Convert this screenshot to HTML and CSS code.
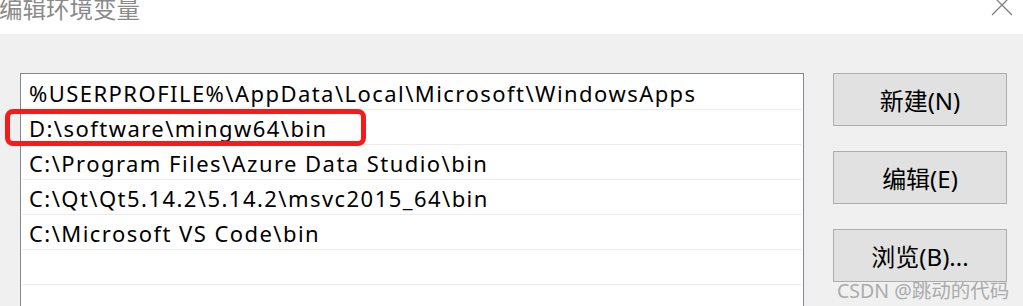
FILE: index.html
```html
<!DOCTYPE html>
<html lang="zh-CN">
<head>
    <meta charset="UTF-8">
    <meta name="viewport" content="width=device-width, initial-scale=1.0">
    <title>编辑环境变量</title>
    <link rel="stylesheet" href="styles.css">
</head>
<body>
    <div class="titlebar">
        <span class="title">编辑环境变量</span>
        <svg class="close" width="22" height="22" viewBox="0 0 22 22">
            <path d="M1 1 L21 21 M21 1 L1 21" stroke="#808080" stroke-width="1.3" fill="none"/>
        </svg>
    </div>
    <div class="dialog">
        <div class="path-list">
            <div class="row">%USERPROFILE%\AppData\Local\Microsoft\WindowsApps</div>
            <div class="row">D:\software\mingw64\bin</div>
            <div class="row">C:\Program Files\Azure Data Studio\bin</div>
            <div class="row">C:\Qt\Qt5.14.2\5.14.2\msvc2015_64\bin</div>
            <div class="row">C:\Microsoft VS Code\bin</div>
            <div class="row"></div>
            <div class="row"></div>
        </div>
        <div class="actions">
            <button class="btn">新建(N)</button>
            <button class="btn">编辑(E)</button>
            <button class="btn">浏览(B)...</button>
        </div>
    </div>
    <div class="highlight"></div>
    <div class="watermark">CSDN @跳动的代码</div>
</body>
</html>
```

FILE: styles.css
```css
body {
    margin: 0;
    width: 1023px;
    height: 306px;
    overflow: hidden;
    background-color: #f0f0f0;
    font-family: "Noto Sans", "Noto Sans CJK SC", sans-serif;
    position: relative;
}
.titlebar {
    height: 34px;
    background-color: #ffffff;
    display: flex;
    justify-content: space-between;
    align-items: flex-start;
    overflow: hidden;
}
.title {
    font-family: "Noto Sans CJK SC", sans-serif;
    font-size: 23.5px;
    line-height: 24px;
    color: #8a8a8a;
    margin-top: -4px;
    margin-left: -1px;
}
.close {
    margin-top: -6px;
    margin-right: 10px;
}
.dialog {
    display: flex;
    padding-top: 39px;
    padding-left: 20px;
}
.path-list {
    width: 784px;
    height: 240px;
    box-sizing: border-box;
    border: 1px solid #828790;
    border-bottom: none;
    background-color: #ffffff;
    padding: 1px 1px 0;
}
.row {
    height: 35px;
    box-sizing: border-box;
    border-bottom: 1px solid #ececec;
    padding-left: 7px;
    font-size: 22px;
    letter-spacing: 1.45px;
    line-height: 36px;
    color: #000;
    white-space: nowrap;
}
.actions {
    display: flex;
    flex-direction: column;
    gap: 25px;
    margin-left: 29px;
}
.btn {
    width: 174px;
    height: 53px;
    background-color: #e1e1e1;
    border: 1px solid #adadad;
    font-family: "Noto Sans", "Noto Sans CJK SC", sans-serif;
    font-size: 24px;
    color: #000;
    padding: 0;
}
.highlight {
    position: absolute;
    left: 5px;
    top: 109px;
    width: 361px;
    height: 37px;
    box-sizing: border-box;
    border: 5px solid #f51b1b;
    border-radius: 8px;
}
.watermark {
    position: absolute;
    left: 837px;
    top: 275px;
    font-family: "Noto Sans", "Noto Sans CJK SC", sans-serif;
    font-size: 19.5px;
    color: #ababab;
}
```
